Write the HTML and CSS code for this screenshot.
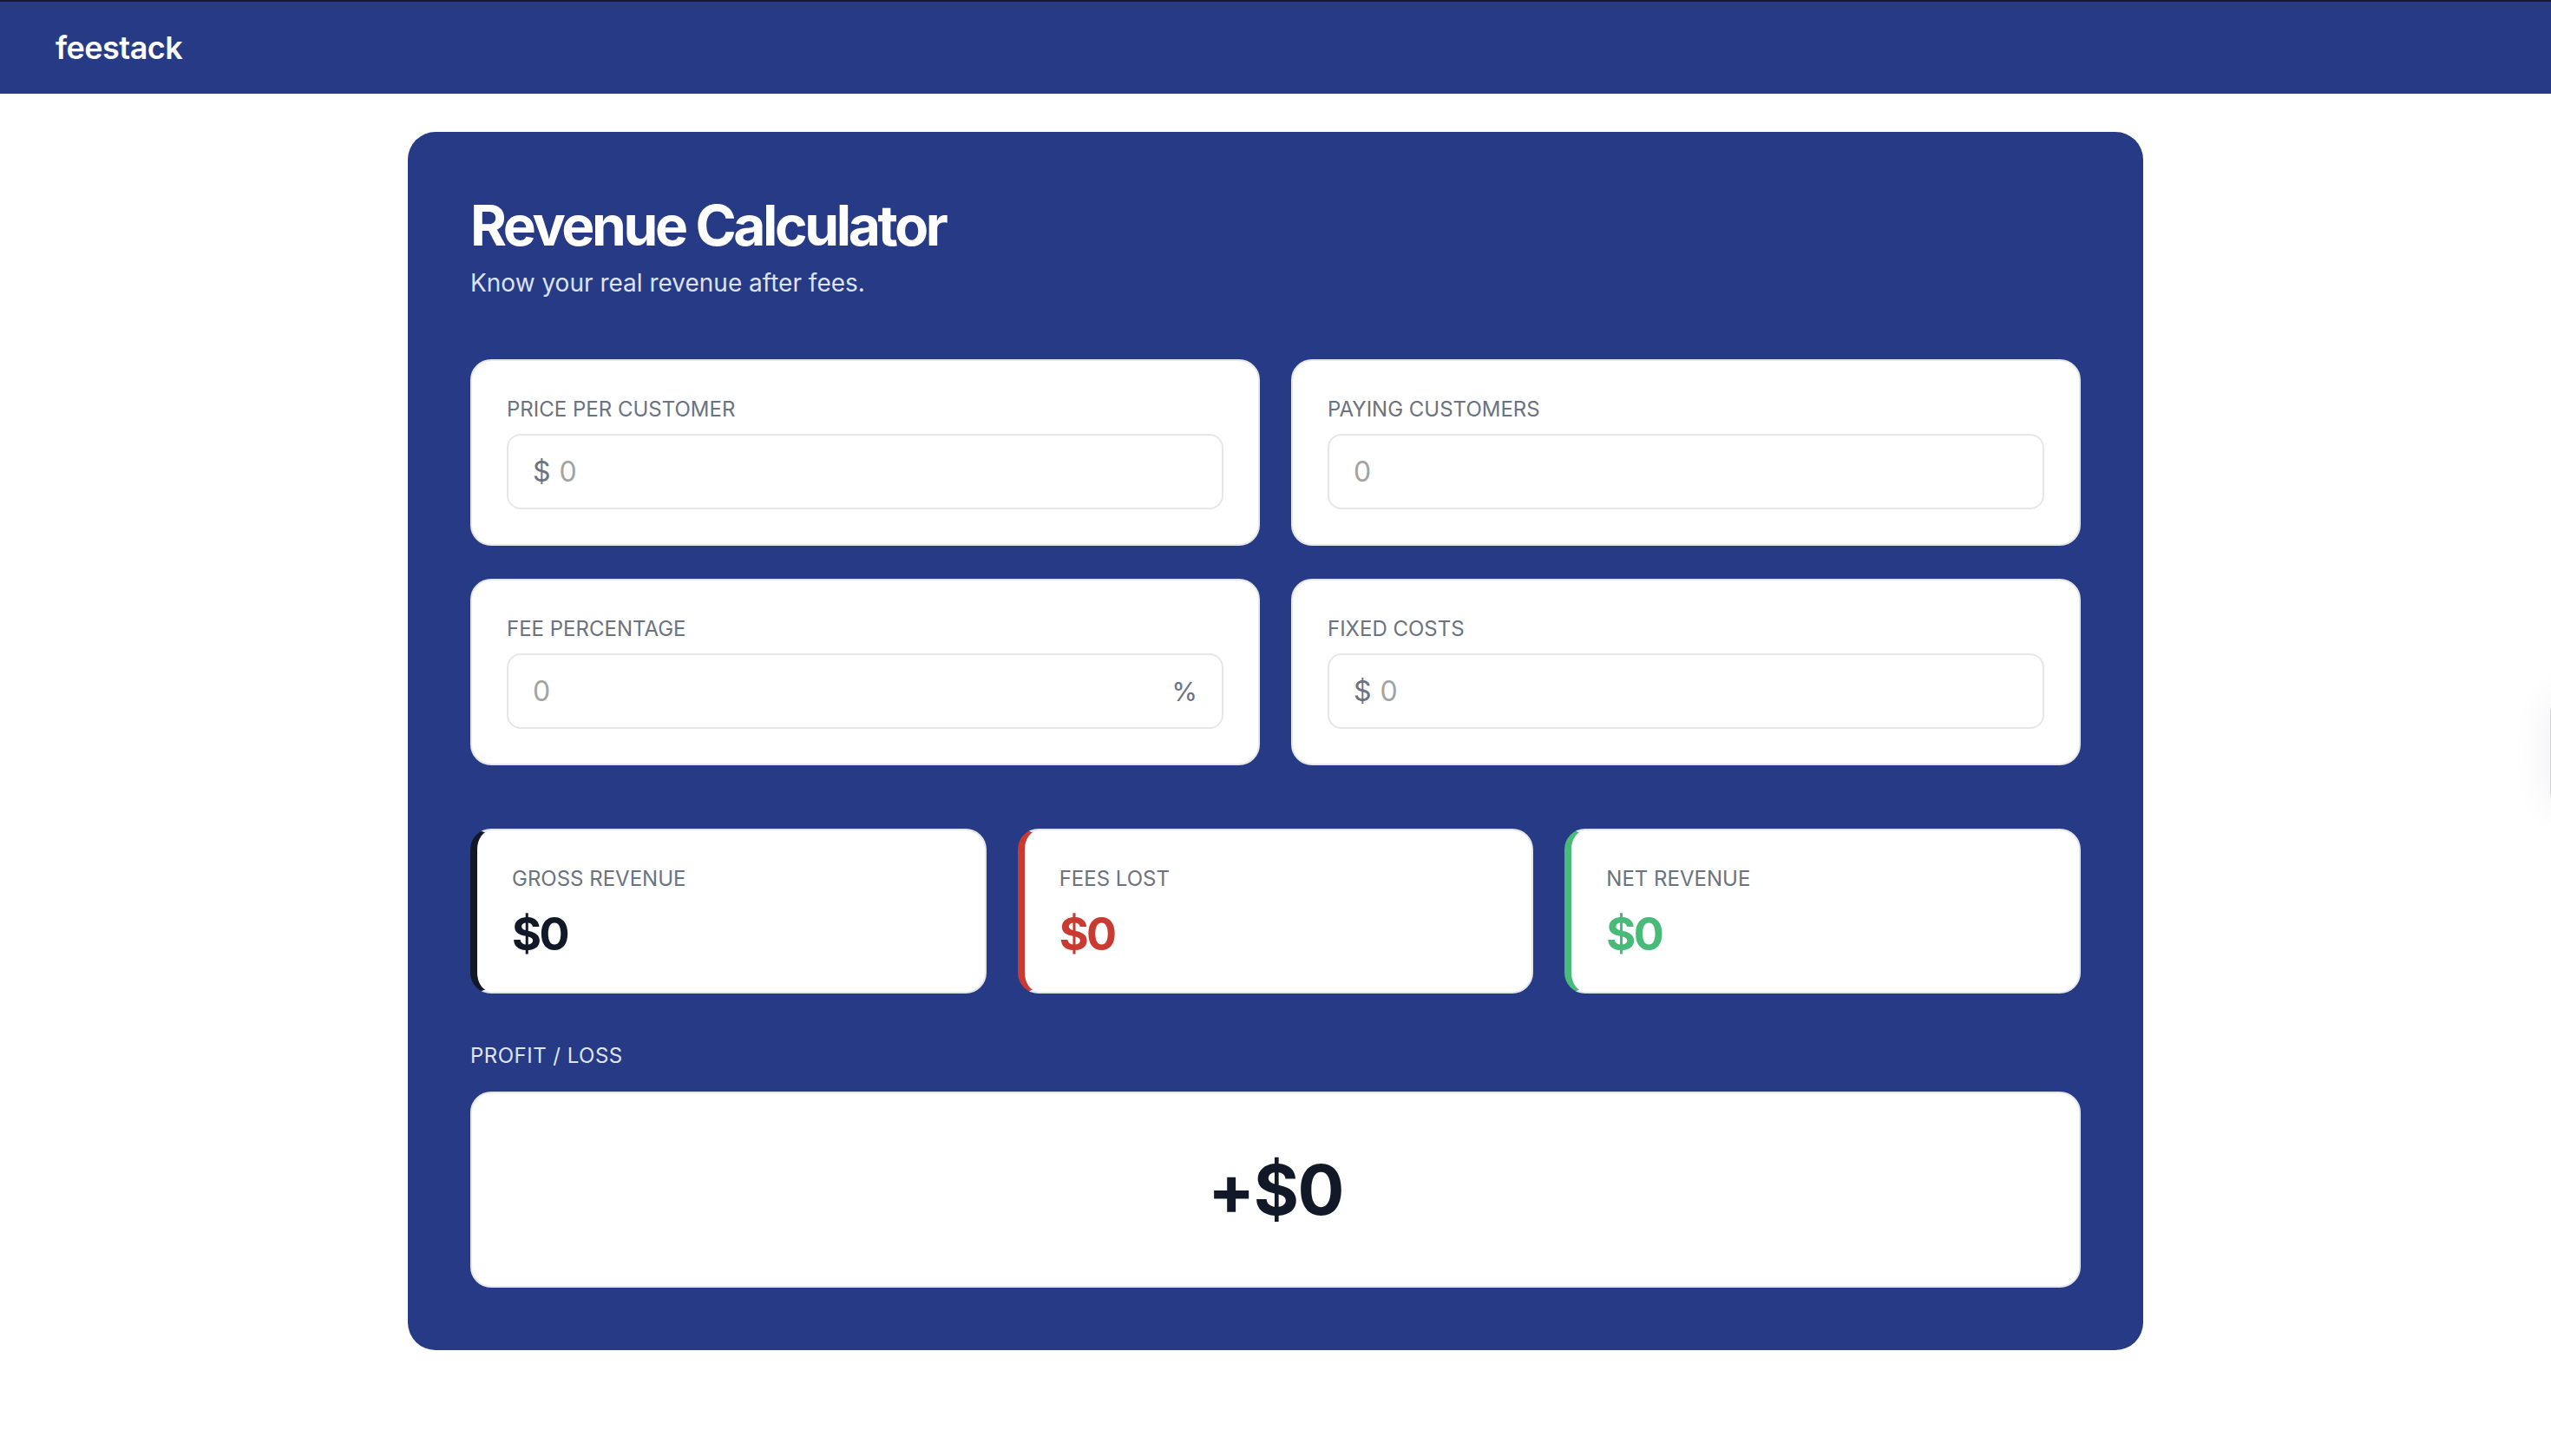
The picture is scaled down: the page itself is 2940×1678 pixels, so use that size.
FILE: index.html
```html
<!DOCTYPE html>
<html lang="en">
<head>
<meta charset="utf-8">
<title>feestack — Revenue Calculator</title>
<link rel="stylesheet" href="styles.css">
</head>
<body>
<header class="topbar">
  <span class="logo">feestack</span>
</header>
<main class="page">
  <section class="calc">
    <div class="calc-head">
      <h1>Revenue Calculator</h1>
      <p>Know your real revenue after fees.</p>
    </div>
    <div class="inputs">
      <div class="field-card">
        <label class="field-label">Price per customer</label>
        <div class="input-box"><span class="affix">$</span><input type="text" placeholder="0"></div>
      </div>
      <div class="field-card">
        <label class="field-label">Paying customers</label>
        <div class="input-box"><input type="text" placeholder="0"></div>
      </div>
      <div class="field-card">
        <label class="field-label">Fee percentage</label>
        <div class="input-box"><input type="text" placeholder="0"><span class="affix suffix">%</span></div>
      </div>
      <div class="field-card">
        <label class="field-label">Fixed costs</label>
        <div class="input-box"><span class="affix">$</span><input type="text" placeholder="0"></div>
      </div>
    </div>
    <div class="results">
      <div class="stat stat-gross">
        <div class="stat-label">Gross revenue</div>
        <div class="stat-value">$0</div>
      </div>
      <div class="stat stat-fees">
        <div class="stat-label">Fees lost</div>
        <div class="stat-value">$0</div>
      </div>
      <div class="stat stat-net">
        <div class="stat-label">Net revenue</div>
        <div class="stat-value">$0</div>
      </div>
    </div>
    <div class="pl-label">Profit / Loss</div>
    <div class="pl-box">+$0</div>
  </section>
</main>
<div class="side-tab"></div>
</body>
</html>
```

FILE: styles.css
```css
* { box-sizing: border-box; }

body {
  margin: 0;
  background: #ffffff;
  font-family: Inter, "Noto Sans", "Liberation Sans", sans-serif;
  overflow: hidden;
}

.topbar {
  height: 108px;
  background: #263a85;
  border-top: 2px solid #151a2c;
  display: flex;
  align-items: center;
  padding: 0 64px;
}

.logo {
  color: #ffffff;
  font-size: 36px;
  line-height: 48px;
  font-weight: 600;
  letter-spacing: -0.015em;
}

.page {
  padding-top: 44px;
}

.calc {
  width: 2000px;
  margin: 0 auto;
  background: #263a85;
  border-radius: 32px;
  padding: 72px;
}

.calc-head h1 {
  margin: 0;
  color: #ffffff;
  font-size: 64px;
  line-height: 72px;
  font-weight: 700;
  letter-spacing: -0.053em;
}

.calc-head p {
  margin: 10px 0 0;
  color: #dde2f2;
  font-size: 28px;
  line-height: 40px;
}

.inputs {
  margin-top: 68px;
  display: grid;
  grid-template-columns: 1fr 1fr;
  gap: 38px 36px;
}

.field-card {
  background: #ffffff;
  border: 2px solid #e5e7eb;
  border-radius: 24px;
  padding: 40px;
}

.field-label,
.stat-label {
  display: block;
  color: #6b7280;
  font-size: 24px;
  line-height: 32px;
  font-weight: 400;
  letter-spacing: 0;
  text-transform: uppercase;
}

.field-label {
  margin-bottom: 12px;
}

.input-box {
  display: flex;
  align-items: center;
  height: 87px;
  border: 2px solid #e5e7eb;
  border-radius: 16px;
  padding: 0 28px;
}

.affix {
  color: #6b7280;
  font-size: 32px;
  margin-right: 10px;
}

.affix.suffix {
  margin: 0 0 0 10px;
  font-size: 30px;
}

.input-box input {
  flex: 1;
  min-width: 0;
  border: 0;
  outline: 0;
  padding: 0;
  background: transparent;
  font-family: inherit;
  font-size: 32px;
  color: #111827;
}

.input-box input::placeholder {
  color: #a3a3a3;
}

.results {
  margin-top: 73px;
  display: grid;
  grid-template-columns: repeat(3, 1fr);
  gap: 36px;
}

.stat {
  background: #ffffff;
  border: 2px solid #e5e7eb;
  border-left: 8px solid #111827;
  border-radius: 24px;
  padding: 40px 40px 34px;
}

.stat-value {
  margin-top: 16px;
  font-size: 52px;
  line-height: 64px;
  font-weight: 700;
  letter-spacing: -0.05em;
  color: #111827;
}

.stat-gross { border-left-color: #111827; }
.stat-fees { border-left-color: #c93a31; }
.stat-net { border-left-color: #48bb78; }

.stat-fees .stat-value { color: #c93a31; }
.stat-net .stat-value { color: #48bb78; }

.pl-label {
  margin-top: 56px;
  color: #dfe4f4;
  font-size: 24px;
  line-height: 32px;
  font-weight: 400;
  letter-spacing: 0.02em;
  text-transform: uppercase;
}

.pl-box {
  margin-top: 25px;
  background: #ffffff;
  border: 2px solid #e5e7eb;
  border-radius: 24px;
  padding: 63px 0;
  text-align: center;
  color: #111827;
  font-size: 80px;
  line-height: 96px;
  font-weight: 700;
  letter-spacing: -0.02em;
}

.side-tab {
  position: fixed;
  top: 804px;
  right: -119px;
  width: 120px;
  height: 126px;
  background: #ffffff;
  border: 1px solid #d4d4d8;
  border-radius: 16px;
  box-shadow: 0 0 48px rgba(0, 0, 0, 0.07);
}
```
